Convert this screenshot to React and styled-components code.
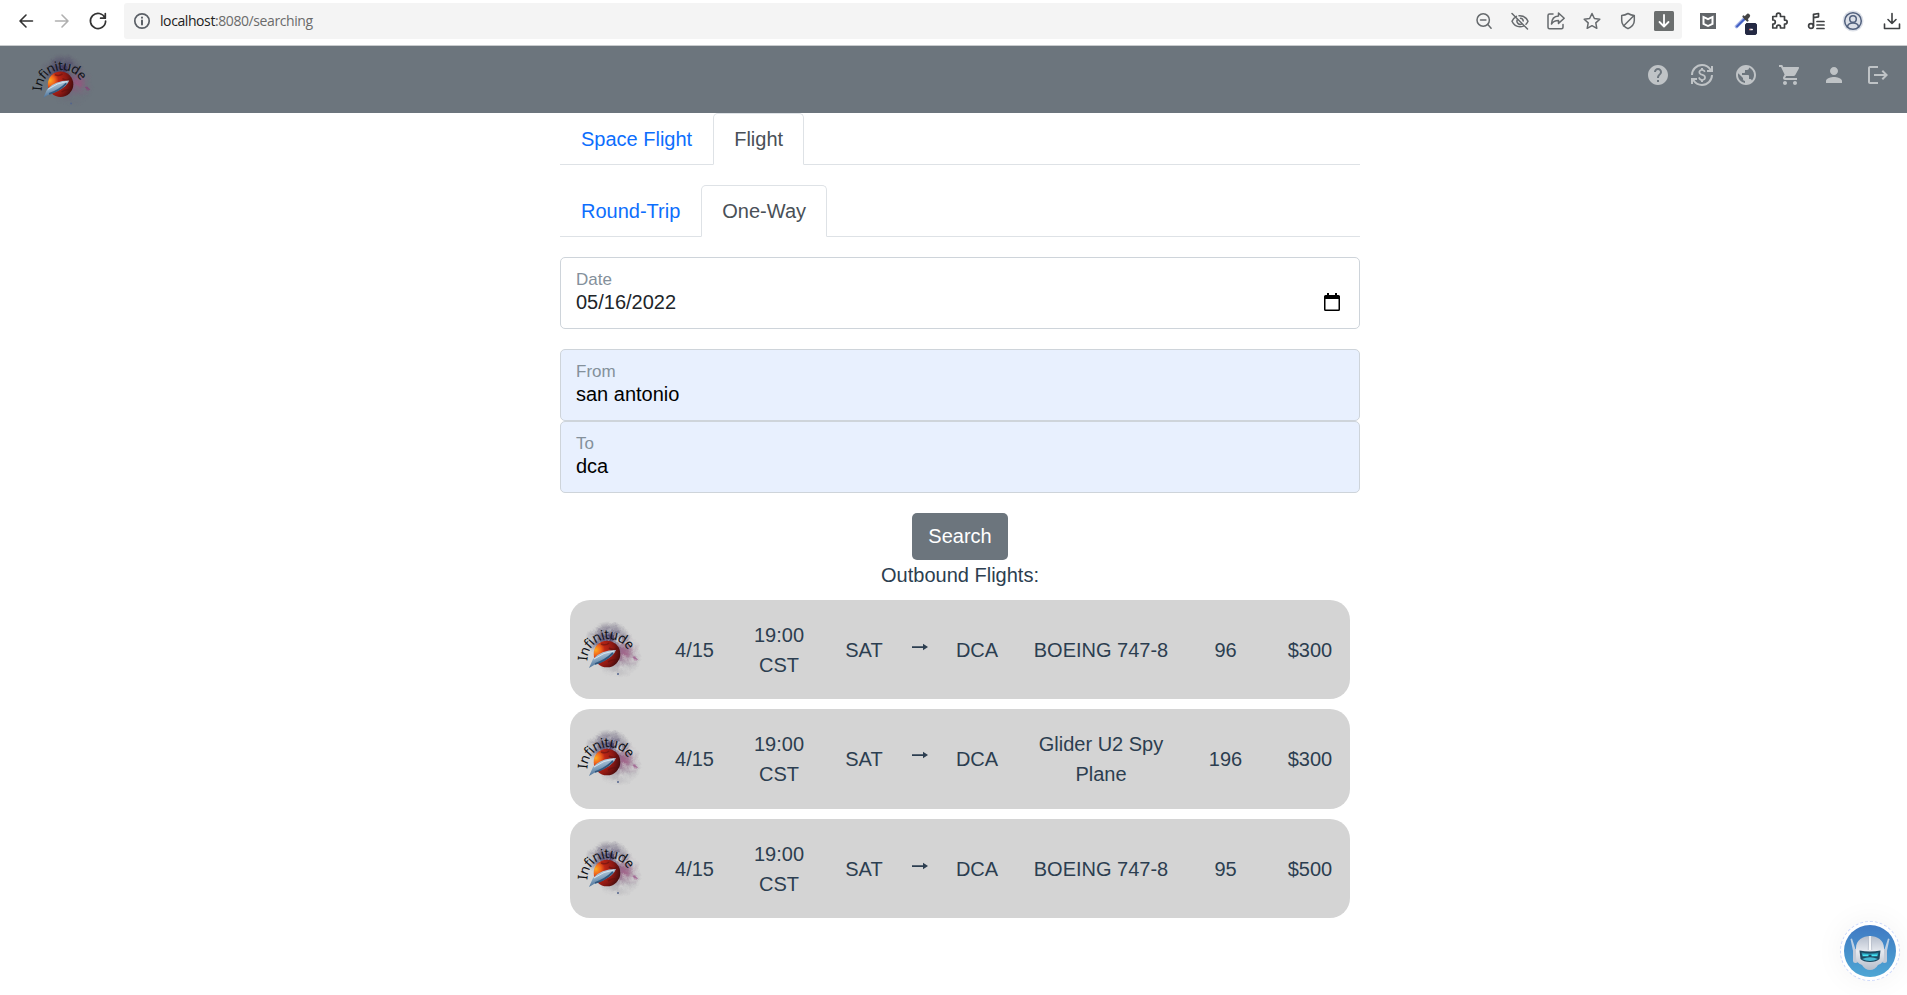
import React from "react";
import styled, { createGlobalStyle } from "styled-components";
import {
  MdHelp,
  MdCurrencyExchange,
  MdPublic,
  MdShoppingCart,
  MdPerson,
  MdLogout,
} from "react-icons/md";

const GlobalStyle = createGlobalStyle`
  *, *::before, *::after { box-sizing: border-box; }
  body {
    margin: 0;
    background: #fff;
    color: #2c3e50;
    font: 20px/30px "Liberation Sans", Arial, sans-serif;
  }
`;

const Page = styled.div`
  height: 995px;
  overflow: hidden;
`;

/* Browser toolbar */
const BrowserBar = styled.div`
  display: flex;
  align-items: flex-start;
  height: 46px;
  padding: 3px 0 0 16px;
  border-bottom: 1px solid #c9ccce;
`;

const BarIcon = styled.svg`
  display: block;
  flex: none;
  width: 20px;
  height: 20px;
  fill: none;
  stroke: ${(p) => p.$color || "#666a6d"};
  stroke-width: ${(p) => p.$weight || 1.5};
  stroke-linecap: round;
  stroke-linejoin: round;
`;

const HistoryButtons = styled.div`
  display: flex;
  gap: 16px;
  width: 108px;
  padding-top: 8px;
`;

const AddressBar = styled.div`
  display: flex;
  align-items: center;
  width: 1558px;
  height: 36px;
  padding: 0 8px;
  border-radius: 3px;
  background: #f4f4f4;
`;

const Address = styled.span`
  flex: 1;
  padding-left: 8px;
  color: #6b6b6b;
  font: 14px/20px "Open Sans", "Noto Sans", sans-serif;
  letter-spacing: -0.41px;
`;

const Host = styled.span`
  color: #222;
`;

const AddressActions = styled.div`
  display: flex;
  gap: 16px;
`;

const Extensions = styled.div`
  display: flex;
  gap: 16px;
  padding: 8px 0 0 16px;
`;

/* Site header */
const Navbar = styled.nav`
  display: flex;
  justify-content: space-between;
  height: 67px;
  padding: 0 17px 0 28px;
  background: #6c757d;
`;

const NavIcons = styled.div`
  display: flex;
  gap: 20px;
  padding-top: 17px;
  color: #bfc3c6;
  font-size: 24px;
  svg { display: block; }
`;

const LogoSvg = styled.svg`
  display: block;
  flex: none;
  width: ${(p) => p.$size}px;
  height: ${(p) => p.$size}px;
`;

const LogoText = styled.text`
  font: 400 13.5px "Noto Sans", "Open Sans", sans-serif;
  fill: #101216;
`;

/* Search form */
const Main = styled.main`
  width: 800px;
  margin: 0 auto 0 560px;
`;

const Tabs = styled.div`
  display: flex;
  height: 52px;
  margin-bottom: 20px;
  border-bottom: 1px solid #dee2e6;
`;

const Tab = styled.div`
  height: 52px;
  padding: 10px 20px;
  border: 1px solid ${(p) => (p.$active ? "#dee2e6" : "transparent")};
  border-bottom-color: ${(p) => (p.$active ? "#fff" : "transparent")};
  border-radius: 5px 5px 0 0;
  color: ${(p) => (p.$active ? "#495057" : "#0d6efd")};
`;

const Field = styled.div`
  display: flex;
  justify-content: space-between;
  height: 72px;
  margin-bottom: ${(p) => p.$gap || 0}px;
  padding: 9px 19px 0 15px;
  border: 1px solid #ced4da;
  border-radius: 5px;
  background: ${(p) => (p.$filled ? "#e8f0fe" : "#fff")};
`;

const FieldLabel = styled.div`
  color: #84909b;
  font-size: 17px;
  line-height: 26px;
`;

const FieldValue = styled.div`
  color: ${(p) => (p.$dark ? "#000" : "#212529")};
  line-height: 18px;
`;

const CalendarIcon = styled.svg`
  width: 16px;
  height: 18px;
  margin-top: 26px;
`;

const Results = styled.section`
  display: flex;
  flex-direction: column;
  align-items: center;
`;

const SearchButton = styled.button`
  width: 96px;
  height: 47px;
  padding: 0 0 2px;
  border: 0;
  border-radius: 5px;
  background: #6c757d;
  color: #fff;
  font: inherit;
`;

const ResultsTitle = styled.div`
  margin-bottom: 10px;
`;

const FlightCard = styled.article`
  display: grid;
  grid-template-columns: 82px 85px 84px 86px 26px 88px 160px 89px 80px;
  align-items: center;
  width: 780px;
  height: ${(p) => (p.$tall ? 100 : 99)}px;
  margin-bottom: 10px;
  padding: ${(p) => (p.$tall ? "0 0 1px" : "1px 0 0")};
  border-radius: 20px;
  background: #d4d4d4;
  text-align: center;
`;

const LogoCell = styled.div`
  padding: 0 0 1px 3px;
`;

const Cell = styled.div`
  padding: 0 ${(p) => p.$inset || 0}px;
`;

const ArrowIcon = styled.svg`
  display: block;
  width: 16px;
  height: 8px;
  margin: -7px auto 0;
`;

const ChatBubble = styled.div`
  position: fixed;
  right: 7px;
  bottom: 14px;
  width: 60px;
  height: 60px;
  border: 1px dashed #ccd8fb;
  border-radius: 50%;
  background: #fff;
  box-shadow: 0 0 30px rgba(0, 0, 0, 0.05);
`;

const BotSvg = styled.svg`
  display: block;
  width: 58px;
  height: 58px;
`;

function Logo({ id, size }) {
  return (
    <LogoSvg $size={size} viewBox="0 0 72 72">
      <defs>
        <radialGradient id={`${id}-dust`}>
          <stop offset="0" stopColor="#35285c" stopOpacity="1" />
          <stop offset=".55" stopColor="#4c4266" stopOpacity=".6" />
          <stop offset="1" stopColor="#6b6676" stopOpacity="0" />
        </radialGradient>
        <radialGradient id={`${id}-haze`}>
          <stop offset="0" stopColor="#6b5f78" stopOpacity=".6" />
          <stop offset="1" stopColor="#6b6676" stopOpacity="0" />
        </radialGradient>
        <radialGradient id={`${id}-pink`}>
          <stop offset="0" stopColor="#a3507f" stopOpacity=".75" />
          <stop offset="1" stopColor="#8b5c83" stopOpacity="0" />
        </radialGradient>
        <radialGradient id={`${id}-planet`} cx=".08" cy=".35" r=".95">
          <stop offset="0" stopColor="#ffab20" />
          <stop offset=".2" stopColor="#f0651c" />
          <stop offset=".36" stopColor="#bd2615" />
          <stop offset=".7" stopColor="#8c1813" />
          <stop offset="1" stopColor="#430c0e" />
        </radialGradient>
        <linearGradient id={`${id}-ship`} x1="0" y1="0" x2=".4" y2="1">
          <stop offset="0" stopColor="#dbe8f1" />
          <stop offset=".5" stopColor="#8fadc6" />
          <stop offset="1" stopColor="#365f8c" />
        </linearGradient>
        <filter id={`${id}-grain`} x="-10%" y="-10%" width="120%" height="120%" colorInterpolationFilters="sRGB">
          <feTurbulence type="fractalNoise" baseFrequency=".12" numOctaves="4" seed="8" result="n" />
          <feColorMatrix in="n" type="matrix" values="0 0 0 0 0  0 0 0 0 0  0 0 0 0 0  0 0 0 2.2 -.35" result="m" />
          <feComposite in="SourceGraphic" in2="m" operator="in" result="c" />
          <feDisplacementMap in="c" in2="n" scale="6" xChannelSelector="R" yChannelSelector="G" />
        </filter>
      </defs>
      <g filter={`url(#${id}-grain)`}>
        <ellipse cx="36" cy="26" rx="23" ry="19" fill={`url(#${id}-dust)`} />
        <ellipse cx="45" cy="42" rx="24" ry="22" fill={`url(#${id}-haze)`} />
        <ellipse cx="51" cy="38" rx="17" ry="17" fill={`url(#${id}-pink)`} />
        <circle cx="61" cy="45" r="1.8" fill="#8a3675" />
      </g>
      <circle cx="45" cy="60" r="1" fill="#53658c" />
      <circle cx="34" cy="40" r="13.3" fill={`url(#${id}-planet)`} />
      <path d="M28 30q5 2 8-1M36 34q5 3 8 0M35 48q4-3 9-2" fill="none" stroke="#5d100e" strokeWidth="1.6" opacity=".55" />
      <path d="M16 54L20 45Q28 36 43 36Q41 42 31 47L21 51Z" fill={`url(#${id}-ship)`} />
      <path d="M22 50Q32 47 40 39" fill="none" stroke="#31587f" strokeWidth="1.8" />
      <path d="M21 45Q31 38 41 37" fill="none" stroke="#d8e5ef" strokeWidth="1" />
      <path id={`${id}-arc`} d="M14.300 46.800A21.500 21.500 0 0 1 57 43" fill="none" />
      <LogoText>
        <textPath href={`#${id}-arc`} textLength="57" lengthAdjust="spacing">Infinitude</textPath>
      </LogoText>
    </LogoSvg>
  );
}

const flights = [
  { plane: "BOEING 747-8", seats: "96", price: "$300" },
  { plane: "Glider U2 Spy Plane", seats: "196", price: "$300" },
  { plane: "BOEING 747-8", seats: "95", price: "$500" },
];

function Toolbar() {
  return (
    <BrowserBar>
      <HistoryButtons>
        <BarIcon viewBox="0 0 20 20" $color="#333" $weight={1.6}>
          <path d="M16.5 10H4.5M10 4L4 10l6 6" />
        </BarIcon>
        <BarIcon viewBox="0 0 20 20" $color="#b0b0b0" $weight={1.6}>
          <path d="M3.5 10h12M10 4l6 6-6 6" />
        </BarIcon>
        <BarIcon viewBox="0 0 20 20" $color="#333" $weight={1.7}>
          <path d="M17 7A7.600 7.600 0 1 0 17.600 10M17.300 2.500v4.700h-4.700" />
        </BarIcon>
      </HistoryButtons>
      <AddressBar>
        <BarIcon viewBox="0 0 20 20" $color="#5b6067" $weight={1.7}>
          <circle cx="10" cy="10" r="7.2" />
          <path d="M10 9.5v4M10 6.5v.2" strokeWidth="2" />
        </BarIcon>
        <Address><Host>localhost</Host>:8080/searching</Address>
        <AddressActions>
          <BarIcon viewBox="0 0 20 20">
            <circle cx="9.2" cy="9" r="6.2" />
            <path d="M6.5 9h5.4M13.8 13.6l3.3 3.6" />
          </BarIcon>
          <BarIcon viewBox="0 0 20 20">
            <path d="M2 2.500l15.500 15.500M6.500 5.300C4.400 6.400 2.800 8.100 2 10.300c1.600 3.500 4.600 5.400 8 5.400q1.800 0 3.400-.6M9 4.700c3.800-.3 7.300 1.900 9 5.600q-.8 1.900-2 3M7.600 8.300a3.200 3.200 0 0 0 4.400 4.500M10.500 7.200a3 3 0 0 1 2.700 2.700" />
          </BarIcon>
          <BarIcon viewBox="0 0 20 20">
            <path d="M7 3H3.500A1.500 1.500 0 0 0 2 4.500v11.700a1.500 1.500 0 0 0 1.500 1.500H15.500a1.500 1.500 0 0 0 1.500-1.500v-2.700M12.500 2l5.700 5.200-5.700 5.200V9.500c-3.500 0-5.500 1-7 3.500C5.700 8 8.500 5.200 12.500 5z" />
          </BarIcon>
          <BarIcon viewBox="0 0 20 20">
            <path d="M10 2.500l2.400 5 5.400.7-4 3.700 1 5.400-4.800-2.600-4.800 2.600 1-5.400-4-3.700 5.400-.7z" />
          </BarIcon>
          <BarIcon viewBox="0 0 20 20">
            <path d="M10 2.500q3 1.800 6.300 2v5c0 4-2.800 6.500-6.300 8.200-3.500-1.700-6.300-4.200-6.300-8.200v-5Q7 4.300 10 2.500zM15.500 5L5.500 15" />
          </BarIcon>
          <BarIcon viewBox="0 0 20 20" $color="#fff" $weight={1.8}>
            <rect width="20" height="20" rx="1.500" fill="#6b6e6e" stroke="none" />
            <path d="M10 4v11M5.500 11l4.500 4.500 4.500-4.500" />
          </BarIcon>
        </AddressActions>
      </AddressBar>
      <Extensions>
        <BarIcon viewBox="0 0 20 20" $color="none">
          <path d="M2 2h16v16H2z" fill="#616569" />
          <path d="M4.500 4.500L10 7l5.500-2.500v9L10 16l-5.500-2.500z" fill="#fff" />
          <path d="M6.500 7.500L10 9.200l3.500-1.700v4.700L10 14l-3.500-1.800z" fill="#616569" />
        </BarIcon>
        <BarIcon viewBox="0 0 20 20" overflow="visible" $color="#444">
          <path d="M2.500 15.500L10.500 7.500" stroke="#a8b5e8" strokeWidth="3.600" />
          <path d="M3 15.500L10 8.500" stroke="#4361c4" strokeWidth="2" />
          <path d="M9.500 5.500l4 4" strokeWidth="2.200" />
          <path d="M12 7l2-2.200" strokeWidth="4.200" />
          <rect x="11.500" y="12.500" width="11" height="11" rx="1.500" fill="#242943" stroke="#242943" strokeWidth="1" />
          <path d="M15.700 18.500h2.600" stroke="#fff" strokeWidth="1.300" />
          <path d="M15.500 18.500h.5" stroke="#e05555" strokeWidth="1" />
        </BarIcon>
        <BarIcon viewBox="0 0 20 20" overflow="visible" $color="#3e4042" $weight={1.7}>
          <path transform="translate(-1 0)" d="M7.500 4.200a2 2 0 0 1 4 0V5.500h4v3.600h.7a1.900 1.900 0 0 1 0 3.900h-.7v4h-4v-1a1.900 1.900 0 0 0-3.800 0v1H3.800v-4h.5a2 2 0 0 0 0-4h-.5V5.500h3.700z" />
        </BarIcon>
        <BarIcon viewBox="0 0 20 20" $color="#3e4042" $weight={1.7}>
          <circle cx="5" cy="15" r="2.400" />
          <path d="M7.500 15V3.300l5-.8v3.300l-5 .8M11 10.500h7M11 14h7M11 17.500h7" />
        </BarIcon>
        <BarIcon viewBox="0 0 20 20" overflow="visible" $color="#52617e" $weight={1.500}>
          <circle cx="11" cy="10" r="10.500" fill="#dce0e8" stroke="none" />
          <circle cx="11" cy="10" r="8.300" />
          <circle cx="11" cy="8" r="3.300" />
          <path d="M5.500 16c.5-5.200 10.500-5.200 11 0" />
        </BarIcon>
        <BarIcon viewBox="0 0 20 20" overflow="visible" $color="#3e4042" $weight={1.600}>
          <path transform="translate(2 0)" d="M12 2.500v10M8 8.500l4 4 4-4M4.500 13v4.500h15V13" />
        </BarIcon>
      </Extensions>
    </BrowserBar>
  );
}

export default function App() {
  return (
    <Page>
      <GlobalStyle />
      <Toolbar />
      <Navbar>
        <Logo id="nav" size={69} />
        <NavIcons>
          <MdHelp />
          <MdCurrencyExchange />
          <MdPublic />
          <MdShoppingCart />
          <MdPerson />
          <MdLogout />
        </NavIcons>
      </Navbar>
      <Main>
        <Tabs>
          <Tab>Space Flight</Tab>
          <Tab $active>Flight</Tab>
        </Tabs>
        <Tabs>
          <Tab>Round-Trip</Tab>
          <Tab $active>One-Way</Tab>
        </Tabs>
        <Field $gap={20}>
          <div>
            <FieldLabel>Date</FieldLabel>
            <FieldValue>05/16/2022</FieldValue>
          </div>
          <CalendarIcon viewBox="0 0 16 18">
            <path d="M3 0h2v2h6V0h2v2h1.500A1.500 1.500 0 0 1 16 3.500v13a1.500 1.500 0 0 1-1.500 1.500h-13A1.500 1.500 0 0 1 0 16.500v-13A1.500 1.500 0 0 1 1.500 2H3zM1.500 6v10.500h13V6z" fill="#000" />
          </CalendarIcon>
        </Field>
        <Field $filled>
          <div>
            <FieldLabel>From</FieldLabel>
            <FieldValue $dark>san antonio</FieldValue>
          </div>
        </Field>
        <Field $filled $gap={20}>
          <div>
            <FieldLabel>To</FieldLabel>
            <FieldValue $dark>dca</FieldValue>
          </div>
        </Field>
        <Results>
          <SearchButton>Search</SearchButton>
          <ResultsTitle>Outbound Flights:</ResultsTitle>
          {flights.map((f, i) => (
            <FlightCard key={i} $tall={i === 1}>
              <LogoCell><Logo id={`flight${i}`} size={72} /></LogoCell>
              <Cell>4/15</Cell>
              <Cell $inset={15}>19:00 CST</Cell>
              <Cell>SAT</Cell>
              <ArrowIcon viewBox="0 0 16 8">
                <path d="M0 3.300h11V.800L16 4l-5 3.200V4.900H0z" fill="#2c3e50" />
              </ArrowIcon>
              <Cell>DCA</Cell>
              <Cell $inset={10}>{f.plane}</Cell>
              <Cell>{f.seats}</Cell>
              <Cell>{f.price}</Cell>
            </FlightCard>
          ))}
        </Results>
      </Main>
      <ChatBubble>
        <BotSvg viewBox="0 0 58 58">
          <defs>
            <linearGradient id="bot-sky" x1="0" y1="0" x2="0" y2="1">
              <stop offset="0" stopColor="#3f79c3" />
              <stop offset="1" stopColor="#4ea6d4" />
            </linearGradient>
            <linearGradient id="bot-helmet" x1="0" y1="0" x2="0" y2="1">
              <stop offset="0" stopColor="#b3bccb" />
              <stop offset=".45" stopColor="#e6e9ef" />
              <stop offset="1" stopColor="#b7bdca" />
            </linearGradient>
          </defs>
          <circle cx="29" cy="29" r="26" fill="url(#bot-sky)" />
          <path d="M9.500 17l1.500-.5 4.500 14-2.500 3zM48.500 17l-1.500-.5-4.500 14 2.500 3z" fill="#bccfe3" />
          <rect x="12" y="27" width="5" height="14" rx="2.500" fill="#c3cad7" />
          <rect x="41" y="27" width="5" height="14" rx="2.500" fill="#c3cad7" />
          <path d="M15 26C15 10 43 10 43 26v9q0 6-6 8-3 5-8 5t-8-5q-6-2-6-8z" fill="url(#bot-helmet)" />
          <path d="M27.800 14h2.400l.5 14h-3.400z" fill="#f8f9fb" />
          <path d="M27.800 14l-.5 14M30.200 14l.5 14" stroke="#a3abba" strokeWidth=".6" />
          <path d="M18.500 28.500q10.500 2 21 0l-1 8.500q-3 3-9.500 3t-9.500-3z" fill="#1c4a62" />
          <path d="M20.500 30.500q8.500 2 17 0l-.5 2.500h-16z" fill="#2b91ac" />
          <path d="M21.500 32.500h6v1.800h-6zM30.500 32.500h6v1.800h-6z" fill="#45e6f5" />
          <path d="M21 37q8-3.500 16 0-8 4-16 0z" fill="#48b8d4" />
        </BotSvg>
      </ChatBubble>
    </Page>
  );
}
